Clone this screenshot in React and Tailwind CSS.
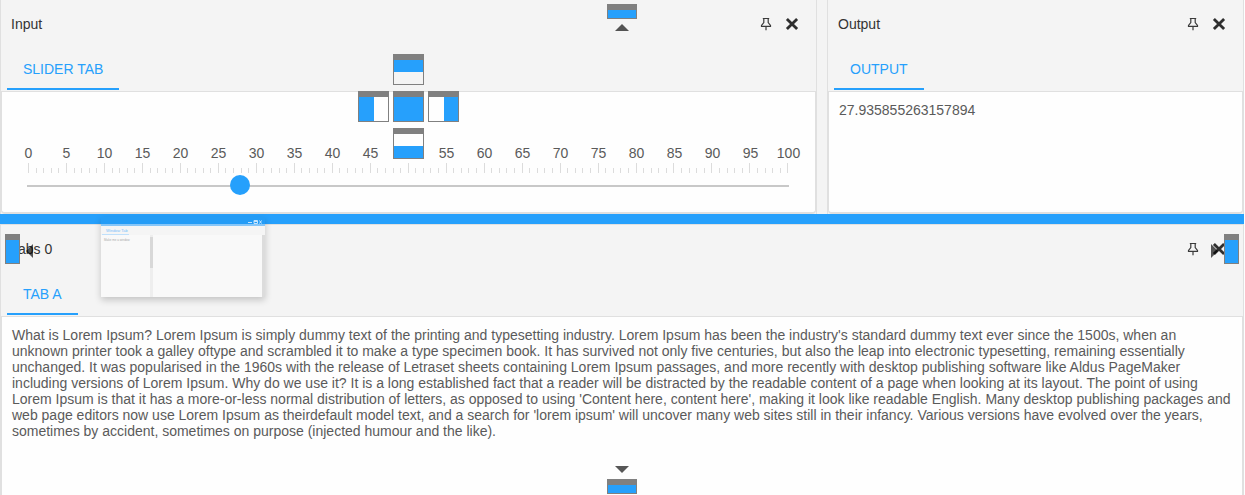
import { useState } from "react";

function PinIcon() {
  return (
    <svg width="12" height="14" viewBox="0 0 12 14" fill="none" stroke="#3a3a3a" strokeWidth="1.2" aria-hidden="true">
      <path d="M2.8 1.5H9.2M3.8 1.5V5.6L1.5 8.4V9.4H10.5V8.4L8.2 5.6V1.5M6 9.4V13.2" />
    </svg>
  );
}

function CloseIcon() {
  return (
    <svg width="12" height="12" viewBox="0 0 12 12" stroke="#2e2e2e" strokeWidth="2.8" className="overflow-visible" aria-hidden="true">
      <path d="M.9.9 11.1 11.1M11.1.9.9 11.1" />
    </svg>
  );
}

function Panel({ title, tab, className = "", bodyClassName = "rounded-b border-b-2", children }) {
  return (
    <section className={`relative flex flex-col border-x border-[#e0e0e0] bg-[#f4f4f4] ${className}`}>
      <header className="flex h-12 items-center justify-between pl-2.5 pr-[11px]">
        <h2 className="text-[#333]">{title}</h2>
        <div className="flex">
          <button type="button" aria-label={`Pin ${title}`} className="flex h-6 w-[26px] items-center justify-center">
            <PinIcon />
          </button>
          <button type="button" aria-label={`Close ${title}`} className="flex h-6 w-[26px] items-center justify-center">
            <CloseIcon />
          </button>
        </div>
      </header>
      <div role="tablist" className="flex h-[43px] items-start pl-1.5">
        <button
          type="button"
          role="tab"
          aria-selected="true"
          className="h-[42px] border-b-2 border-[#26a0fc] px-4 pt-0.5 text-[#26a0fc]"
        >
          {tab}
        </button>
      </div>
      <div className={`flex-1 border-x border-t border-[#e0e0e0] bg-[#fefefe] ${bodyClassName}`}>{children}</div>
    </section>
  );
}

const LABELS = Array.from({ length: 21 }, (_, i) => i * 5);
const TICKS = Array.from({ length: 101 }, (_, i) => i);

function Slider({ value, onChange }) {
  return (
    <div className="px-4 pb-[17px] pt-[53px]">
      <div className="mx-2.5 flex justify-between">
        {LABELS.map((n) => (
          <span key={n} className="flex w-px justify-center">
            {n}
          </span>
        ))}
      </div>
      <div className="mx-2.5 mt-0.5 flex h-2.5 items-end justify-between">
        {TICKS.map((n) => (
          <span key={n} className={n % 5 === 0 ? "h-2.5 w-px bg-[#dcdcdc]" : "h-[5px] w-px bg-[#dcdcdc]"} />
        ))}
      </div>
      <input
        type="range"
        aria-label="Value"
        min="0"
        max="100"
        step="any"
        value={value}
        onChange={(e) => onChange(Number(e.target.value))}
        className="mt-0.5 block h-5 w-[calc(100%-1px)] appearance-none bg-[linear-gradient(#c8c8c8,#c8c8c8)] bg-[length:calc(100%_-_18px)_2px] bg-[position:9px_10px] bg-no-repeat [&::-webkit-slider-thumb]:size-5 [&::-webkit-slider-thumb]:appearance-none [&::-webkit-slider-thumb]:rounded-full [&::-webkit-slider-thumb]:bg-[#26a0fc]"
      />
    </div>
  );
}

function Guide({ fill, className }) {
  return (
    <div className={`flex size-[31px] flex-col border border-t-[6px] border-[#808080] ${className}`}>
      <div className={`bg-[#26a0fc] ${fill}`} />
    </div>
  );
}

function Compass() {
  return (
    <div className="pointer-events-none absolute inset-0 bottom-px grid grid-cols-[repeat(3,31px)] place-content-center gap-x-1 gap-y-1.5">
      <Guide className="col-start-2" fill="h-3 w-full" />
      <Guide className="col-start-1 row-start-2 bg-[#fefefe]" fill="h-full w-[15px]" />
      <Guide className="col-start-2 row-start-2" fill="h-full w-full" />
      <Guide className="col-start-3 row-start-2 items-end bg-[#fefefe]" fill="h-full w-[14px]" />
      <Guide className="col-start-2 row-start-3 justify-end bg-[#fefefe]" fill="h-3 w-full" />
    </div>
  );
}

function EdgeGuides() {
  const bar = "border border-t-[6px] border-[#808080] bg-[#26a0fc]";
  return (
    <>
      <div className="absolute left-1/2 top-1 flex -translate-x-1/2 flex-col items-center gap-[5px]">
        <div className={`h-[15px] w-[30px] ${bar}`} />
        <svg width="14" height="7" viewBox="0 0 14 7" fill="#000" fillOpacity="0.66"><path d="M0 7 7 0 14 7z" /></svg>
      </div>
      <div className="absolute bottom-px left-1/2 flex -translate-x-1/2 flex-col items-center gap-1.5">
        <svg width="14" height="7" viewBox="0 0 14 7" fill="#000" fillOpacity="0.66"><path d="M0 0 7 7 14 0z" /></svg>
        <div className={`h-[15px] w-[30px] ${bar}`} />
      </div>
      <div className="absolute left-[5px] top-[234px] flex items-center gap-1.5">
        <div className={`h-[30px] w-[15px] ${bar}`} />
        <svg width="7" height="14" viewBox="0 0 7 14" className="mt-1" fill="#000" fillOpacity="0.66"><path d="M7 0 0 7 7 14z" /></svg>
      </div>
      <div className="absolute right-[5px] top-[234px] flex items-center gap-1.5">
        <svg width="7" height="14" viewBox="0 0 7 14" className="mt-1" fill="#000" fillOpacity="0.66"><path d="M0 0 7 7 0 14z" /></svg>
        <div className={`h-[30px] w-[15px] ${bar}`} />
      </div>
    </>
  );
}

function FloatingWindow() {
  return (
    <div className="absolute left-[101px] top-[217px] flex h-20 w-[164px] flex-col bg-[#f9f9f9] shadow-[0_3px_7px_rgba(0,0,0,0.2)]">
      <div className="flex h-[9px] items-center justify-end border-b-2 border-[#86c6f8] bg-[#249cf6] pr-[3px] pt-[3px]">
        <svg width="14" height="4" viewBox="0 0 14 4" fill="none" stroke="#c5e4fd" aria-hidden="true">
          <path d="M0 2.5H4M6 .5H9.5V3.5H6zM6 1.5H9.5M11.5.5 13.5 3.5M13.5.5 11.5 3.5" />
        </svg>
      </div>
      <div className="flex h-[9px] bg-[#f5f5f5] pl-px">
        <span className="h-[9px] border-b border-[#bfe0fb] pl-1 pr-px pt-0.5 text-[4px] leading-[5px] text-[#79c0f9]">Window Tab</span>
      </div>
      <div className="flex flex-1">
        <div className="w-[49px] pl-[3px] pt-[3px] text-[3px] leading-[4px] text-[#aaa]">Make me a window</div>
        <div className="w-[3px] bg-[#eee] pt-0.5">
          <div className="h-[31px] bg-[#d8d8d8]" />
        </div>
        <div className="flex-1" />
        <div className="w-[3px] bg-[#dcdcdc]" />
      </div>
    </div>
  );
}

export default function App() {
  const [value, setValue] = useState(27.935855263157894);
  return (
    <div className="min-h-screen bg-[#fefefe] pr-px font-['Liberation_Sans',Arial,sans-serif] text-[14px] leading-4 text-[#5a5a5a]">
      <main className="relative flex min-h-screen flex-col bg-[#f4f4f4]">
        <div className="grid grid-cols-[817fr_417fr] gap-2.5">
          <Panel title="Input" tab="SLIDER TAB">
            <Slider value={value} onChange={setValue} />
            <Compass />
          </Panel>
          <Panel title="Output" tab="OUTPUT">
            <output className="block px-2.5 pt-2.5">{value}</output>
          </Panel>
        </div>
        <div className="h-2.5 bg-[#26a0fc]" />
        <Panel title="Tabs 0" tab="TAB A" className="flex-1 border-t" bodyClassName="">
          <p className="px-2.5 pt-2.5">
            What is Lorem Ipsum? Lorem Ipsum is simply dummy text of the printing and typesetting industry. Lorem Ipsum
            has been the industry's standard dummy text ever since the 1500s, when an unknown printer took a galley
            oftype and scrambled it to make a type specimen book. It has survived not only five centuries, but also the
            leap into electronic typesetting, remaining essentially unchanged. It was popularised in the 1960s with the
            release of Letraset sheets containing Lorem Ipsum passages, and more recently with desktop publishing
            software like Aldus PageMaker including versions of Lorem Ipsum. Why do we use it? It is a long established
            fact that a reader will be distracted by the readable content of a page when looking at its layout. The
            point of using Lorem Ipsum is that it has a more-or-less normal distribution of letters, as opposed to using
            'Content here, content here', making it look like readable English. Many desktop publishing packages and web
            page editors now use Lorem Ipsum as theirdefault model text, and a search for 'lorem ipsum' will uncover
            many web sites still in their infancy. Various versions have evolved over the years, sometimes by accident,
            sometimes on purpose (injected humour and the like).
          </p>
        </Panel>
        <FloatingWindow />
        <EdgeGuides />
      </main>
    </div>
  );
}
